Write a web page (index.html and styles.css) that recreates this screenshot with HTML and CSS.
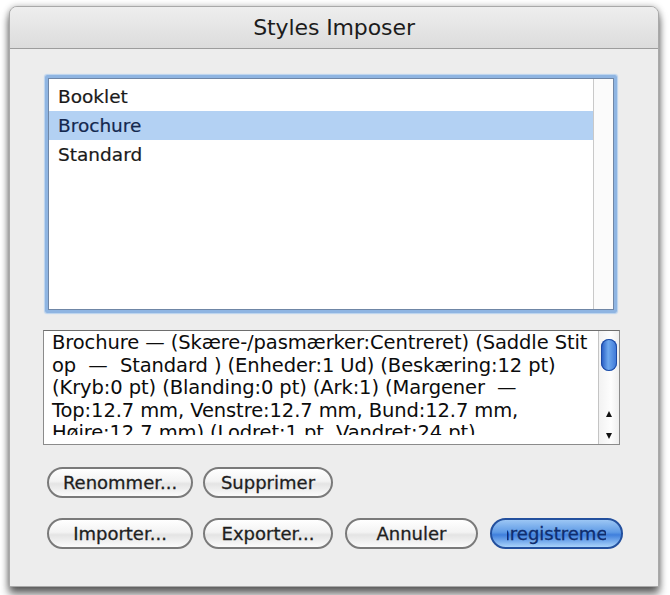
FILE: index.html
```html
<!DOCTYPE html>
<html>
<head>
<meta charset="utf-8">
<link rel="stylesheet" href="styles.css">
</head>
<body>
<div class="window">
  <div class="titlebar">Styles Imposer</div>
  <div class="content">
    <div class="listbox">
      <div class="list-inner">
        <div class="rows">
          <div class="row">Booklet</div>
          <div class="row selected">Brochure</div>
          <div class="row">Standard</div>
        </div>
        <div class="list-scroll"></div>
      </div>
    </div>

    <div class="descbox">
      <div class="desc-text">
        <div class="line">Brochure — (Skære-/pasmærker:Centreret) (Saddle Stit</div>
        <div class="line">op  —  Standard ) (Enheder:1 Ud) (Beskæring:12 pt)</div>
        <div class="line">(Kryb:0 pt) (Blanding:0 pt) (Ark:1) (Margener  —</div>
        <div class="line">Top:12.7 mm, Venstre:12.7 mm, Bund:12.7 mm,</div>
        <div class="line">Højre:12.7 mm) (Lodret:1 pt, Vandret:24 pt)</div>
      </div>
      <div class="vscroll">
        <div class="thumb"></div>
        <div class="track"></div>
        <div class="arrows">
          <span class="arrow up"></span>
          <span class="arrow down"></span>
        </div>
      </div>
    </div>

    <div class="btn-row first">
      <div class="btn w146"><span class="label">Renommer...</span></div>
      <div class="btn w130"><span class="label">Supprimer</span></div>
    </div>
    <div class="btn-row second">
      <div class="btn w146"><span class="label">Importer...</span></div>
      <div class="btn w130"><span class="label">Exporter...</span></div>
      <div class="btn w133 cancel"><span class="label">Annuler</span></div>
      <div class="btn w133 default"><span class="label">Enregistrement</span></div>
    </div>
  </div>
</div>
</body>
</html>
```

FILE: styles.css
```css
html, body {
  margin: 0;
  padding: 0;
}
body {
  width: 670px;
  height: 595px;
  background: #ffffff;
  font-family: "DejaVu Sans", "Liberation Sans", sans-serif;
  overflow: hidden;
  padding: 6px 0 0 9px;
  box-sizing: border-box;
}
.window {
  width: 650px;
  height: 581px;
  box-sizing: border-box;
  border: 1px solid #a9a9a9;
  border-radius: 8px 8px 0 0;
  background: #ededed;
  box-shadow: 0 7px 9px rgba(0,0,0,0.6), 0 0 6px rgba(0,0,0,0.25);
  display: flex;
  flex-direction: column;
}
.titlebar {
  height: 41px;
  border-radius: 7px 7px 0 0;
  background: linear-gradient(#eeeeee, #dcdcdc);
  border-bottom: 1px solid #9d9d9d;
  display: flex;
  align-items: center;
  justify-content: center;
  font-size: 22px;
  color: #1c1c1c;
  letter-spacing: -0.1px;
}
.content {
  flex: 1;
  display: flex;
  flex-direction: column;
  padding: 26px 0 0 35px;
}
.listbox {
  width: 572px;
  height: 238px;
  box-sizing: border-box;
  border: 3px solid #8fb5e2;
  border-radius: 2px;
  box-shadow: 0 0 1px 1px #b9d2ee;
}
.list-inner {
  height: 100%;
  box-sizing: border-box;
  border: 1px solid #6f86a6;
  background: #ffffff;
  display: flex;
  padding-top: 3px;
}
.rows {
  flex: 1;
}
.row {
  height: 29px;
  line-height: 29px;
  padding-left: 9px;
  font-size: 18.5px;
  color: #1a1a1a;
  -webkit-text-stroke: 0.2px currentColor;
}
.row.selected {
  background: #b3d1f3;
  color: #14284e;
}
.list-scroll {
  width: 19px;
  border-left: 1px solid #c9c9c9;
  margin-top: -3px;
  background: #fbfbfb;
}
.descbox {
  margin-top: 17px;
  margin-left: -2px;
  width: 577px;
  height: 115px;
  box-sizing: border-box;
  border: 1px solid #8b8b8b;
  border-top-color: #6e6e6e;
  background: #ffffff;
  display: flex;
}
.desc-text {
  flex: 1;
  overflow: hidden;
  margin-bottom: 9px;
  padding: 1px 0 0 8px;
  font-size: 19.5px;
  line-height: 22.5px;
  letter-spacing: -0.1px;
  color: #0c0c0c;
}
.line {
  white-space: pre;
}
.vscroll {
  width: 20px;
  border-left: 1px solid #c4c4c4;
  background: linear-gradient(90deg, #f2f2f2, #fdfdfd 60%, #eeeeee);
  display: flex;
  flex-direction: column;
  align-items: center;
}
.thumb {
  margin-top: 8px;
  width: 16px;
  height: 32px;
  border-radius: 8px;
  background: linear-gradient(90deg, #1f55c0, #6fa9ee 45%, #3b74d6);
  box-shadow: inset 0 0 0 1px #1d4aa4;
}
.track {
  flex: 1;
}
.arrows {
  display: flex;
  flex-direction: column;
  align-items: center;
  gap: 16px;
  padding-bottom: 5px;
}
.arrow {
  width: 0;
  height: 0;
  border-left: 3.5px solid transparent;
  border-right: 3.5px solid transparent;
}
.arrow.up {
  border-bottom: 6px solid #111;
}
.arrow.down {
  border-top: 6px solid #111;
}
.btn-row {
  display: flex;
  gap: 10px;
  margin-left: 2px;
}
.btn-row.first {
  margin-top: 22px;
}
.btn-row.second {
  margin-top: 20px;
}
.btn-row.second .cancel {
  margin-left: 2px;
}
.btn-row.second .default {
  margin-left: 2px;
}
.btn {
  height: 31px;
  box-sizing: border-box;
  border: 2px solid #7a7a7a;
  border-radius: 16px;
  background: linear-gradient(#ffffff, #f3f3f3 45%, #e4e4e4 55%, #fbfbfb);
  display: flex;
  justify-content: center;
  align-items: center;
  padding: 0 15px;
}
.w146 { width: 146px; }
.w130 { width: 130px; }
.w133 { width: 133px; }
.label {
  display: flex;
  justify-content: center;
  overflow: hidden;
  white-space: nowrap;
  width: 100%;
  font-size: 18px;
  color: #1e1e1e;
  line-height: 27px;
  -webkit-text-stroke: 0.3px currentColor;
}
.btn.default {
  border-color: #23509e;
  background: linear-gradient(#9cc6f4, #5f9be6 45%, #3f7fdc 55%, #a9d3fb);
}
.btn.default .label {
  color: #0f2d6e;
}
```
